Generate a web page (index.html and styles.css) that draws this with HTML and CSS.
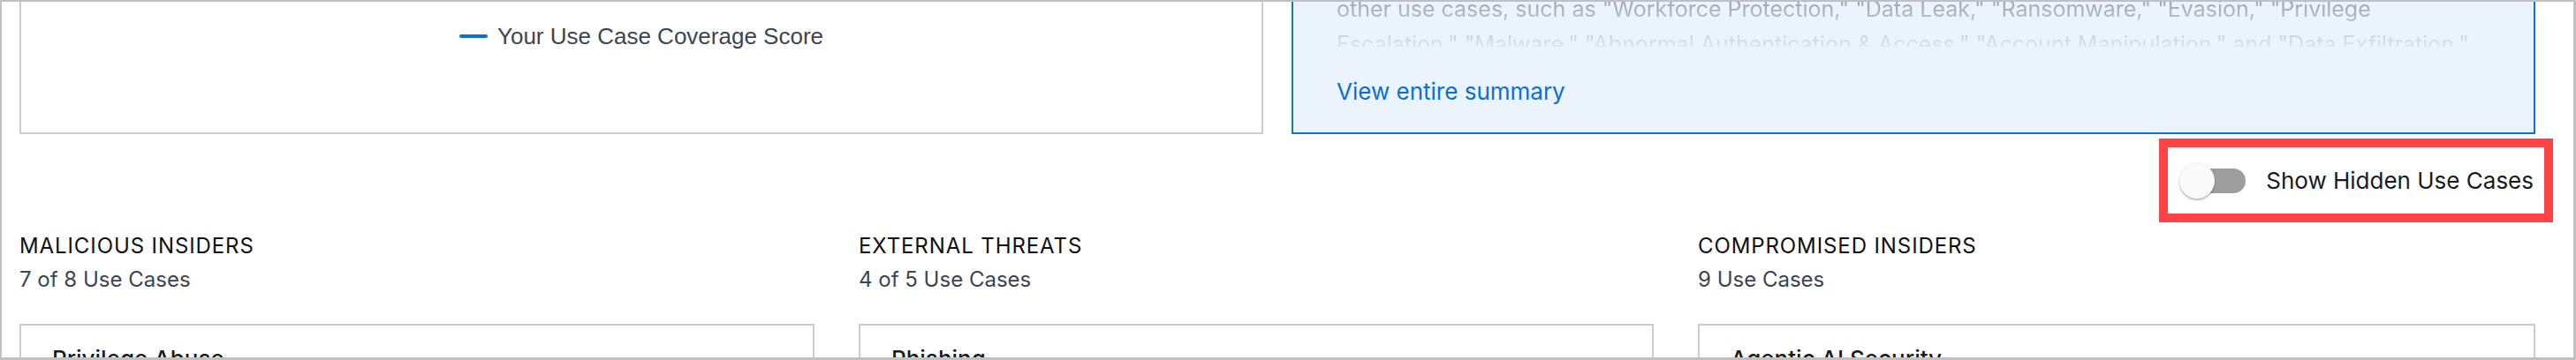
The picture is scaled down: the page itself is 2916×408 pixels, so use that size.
FILE: index.html
```html
<!DOCTYPE html>
<html lang="en">
<head>
  <meta charset="utf-8">
  <meta name="viewport" content="width=device-width, initial-scale=1.0">
  <title>Use Case Coverage</title>
  <link rel="stylesheet" href="styles.css">
</head>
<body>
  <div class="frame">
    <div class="page">

      <div class="top-row">
        <div class="card chart-card">
          <div class="legend">
            <span class="legend-line"></span>
            <span class="legend-text">Your Use Case Coverage Score</span>
          </div>
        </div>

        <div class="card summary-card">
          <p class="summary-text">other use cases, such as "Workforce Protection," "Data Leak," "Ransomware," "Evasion," "Privilege Escalation," "Malware," "Abnormal Authentication &amp; Access," "Account Manipulation," and "Data Exfiltration." Enabling these would improve your overall score.</p>
          <a href="#" class="summary-link">View entire summary</a>
        </div>
      </div>

      <div class="toolbar">
        <div class="highlight">
          <label class="switch-label">
            <span class="switch">
              <span class="switch-track"></span>
              <span class="switch-thumb"></span>
            </span>
            <span>Show Hidden Use Cases</span>
          </label>
        </div>
      </div>

      <div class="columns">
        <div class="column">
          <h3 class="column-title">MALICIOUS INSIDERS</h3>
          <p class="column-count">7 of 8 Use Cases</p>
          <div class="card use-case">
            <div class="use-case-name">Privilege Abuse</div>
          </div>
        </div>

        <div class="column">
          <h3 class="column-title">EXTERNAL THREATS</h3>
          <p class="column-count">4 of 5 Use Cases</p>
          <div class="card use-case">
            <div class="use-case-name">Phishing</div>
          </div>
        </div>

        <div class="column">
          <h3 class="column-title">COMPROMISED INSIDERS</h3>
          <p class="column-count">9 Use Cases</p>
          <div class="card use-case">
            <div class="use-case-name">Agentic AI Security</div>
          </div>
        </div>
      </div>

    </div>
  </div>
</body>
</html>
```

FILE: styles.css
```css
* {
  box-sizing: border-box;
}

body {
  margin: 0;
  font-family: Inter, "Noto Sans", sans-serif;
  background: #fff;
}

.frame {
  width: 2916px;
  height: 408px;
  border-style: solid;
  border-color: #c0c0c0;
  border-width: 2px 3px 3px 2px;
  overflow: hidden;
}

.page {
  padding: 0 43px 0 20px;
}

.card {
  background: #fff;
  border: 2px solid #ccc;
}

/* top row */

.top-row {
  display: grid;
  grid-template-columns: 1fr 1fr;
  gap: 32px;
  margin-top: -60px;
  height: 209px;
}

.chart-card {
  display: flex;
  flex-direction: column;
  justify-content: flex-end;
  align-items: center;
  padding-bottom: 94px;
}

.legend {
  display: flex;
  align-items: center;
  font-family: "Liberation Sans", Arial, sans-serif;
  font-size: 26px;
  line-height: 30px;
  color: #3d4452;
}

.legend-line {
  width: 32px;
  height: 4px;
  border-radius: 2px;
  background: #0a72d6;
  margin-right: 11px;
}

.summary-card {
  background: #ebf3fd;
  border-color: #0a72d6;
  border-left-color: #137f9f;
  padding: 46px 49px 26px 49px;
}

.summary-text {
  margin: 0;
  font-size: 25px;
  line-height: 40px;
  height: 63px;
  overflow: hidden;
  color: #374151;
  -webkit-mask-image: linear-gradient(to bottom, rgba(0, 0, 0, 0.5), rgba(0, 0, 0, 0.08));
  mask-image: linear-gradient(to bottom, rgba(0, 0, 0, 0.5), rgba(0, 0, 0, 0.08));
}

.summary-link {
  display: block;
  margin-top: 31px;
  font-size: 26px;
  line-height: 40px;
  color: #0a6fd8;
  text-decoration: none;
}

/* toggle */

.toolbar {
  display: flex;
  justify-content: flex-end;
  margin-top: 6px;
  margin-right: -20px;
}

.highlight {
  border: 10px solid #fd4346;
  height: 95px;
  padding: 0 12px 0 13px;
  display: flex;
  align-items: center;
}

.switch-label {
  display: flex;
  align-items: center;
  gap: 22px;
  font-size: 26px;
  color: #1a1a1a;
  cursor: pointer;
}

.switch {
  position: relative;
  width: 76px;
  height: 40px;
}

.switch-track {
  position: absolute;
  left: 6px;
  top: 6px;
  width: 69px;
  height: 28px;
  border-radius: 14px;
  background: #9e9e9e;
}

.switch-thumb {
  position: absolute;
  left: 0;
  top: 0;
  width: 40px;
  height: 40px;
  border-radius: 50%;
  background: #fafafa;
  box-shadow: 0 2px 2px rgba(0, 0, 0, 0.24), 0 0 2px rgba(0, 0, 0, 0.14);
}

/* use case columns */

.columns {
  display: grid;
  grid-template-columns: 900px 900px 1fr;
  gap: 50px;
  margin-top: 8px;
}

.column-title {
  margin: 0;
  font-size: 24px;
  line-height: 38px;
  font-weight: 400;
  letter-spacing: 0.9px;
  color: #111;
}

.column-count {
  margin: 0;
  font-size: 24px;
  line-height: 38px;
  color: #3d4452;
}

.use-case {
  margin-top: 31px;
  padding: 22px 35px;
  height: 200px;
}

.use-case-name {
  font-size: 26px;
  line-height: 32px;
  font-weight: 500;
  color: #1a1a1a;
}
```
